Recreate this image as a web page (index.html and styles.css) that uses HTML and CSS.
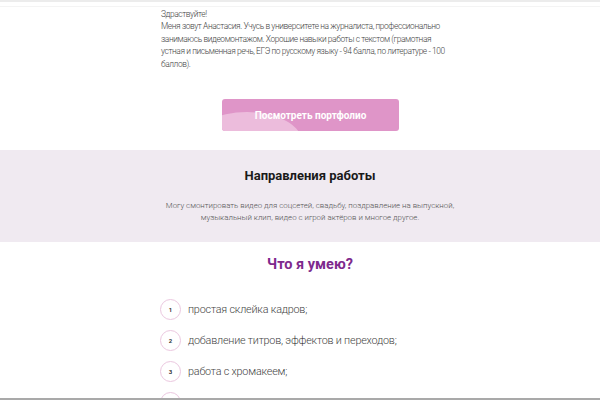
FILE: index.html
```html
<!DOCTYPE html>
<html lang="ru">
<head>
    <meta charset="UTF-8">
    <meta name="viewport" content="width=device-width, initial-scale=1.0">
    <title>Анастасия — видеомонтаж</title>
    <link rel="stylesheet" href="styles.css">
</head>
<body>
    <div class="topbar"></div>

    <section class="about">
        <p>
            Здраствуйте!<br>
            Меня зовут Анастасия. Учусь в университете на журналиста, профессионально<br>
            занимаюсь видеомонтажом. Хорошие навыки работы с текстом (грамотная<br>
            устная и письменная речь, ЕГЭ по русскому языку - 94 балла, по литературе - 100<br>
            баллов).
        </p>
        <a href="#" class="btn"><span>Посмотреть портфолио</span></a>
    </section>

    <section class="directions">
        <h2>Направления работы</h2>
        <p>Могу смонтировать видео для соцсетей, свадьбу, поздравление на выпускной,<br>
            музыкальный клип, видео с игрой актёров и многое другое.</p>
    </section>

    <section class="skills">
        <h2>Что я умею?</h2>
        <ul>
            <li><span class="num">1</span>простая склейка кадров;</li>
            <li><span class="num">2</span>добавление титров, эффектов и переходов;</li>
            <li><span class="num">3</span>работа с хромакеем;</li>
            <li><span class="num">4</span>цветокоррекция;</li>
        </ul>
    </section>

    <div class="bottombar"></div>
</body>
</html>
```

FILE: styles.css
```css
* {
    margin: 0;
    padding: 0;
    box-sizing: border-box;
    font-family: Roboto, 'Liberation Sans', sans-serif;
}
body {
    background-color: #fff;
    color: #555;
}
.topbar {
    height: 7px;
    border-top: 2px solid #ececec;
    border-bottom: 1px solid #f4f4f4;
}
.about {
    width: 300px;
    margin: 0 0 0 161px;
    padding-top: 1px;
}
.about p {
    white-space: nowrap;
    font-size: 8.4px;
    font-weight: 300;
    line-height: 12.4px;
    letter-spacing: -0.4px;
    color: #444;
}
.btn {
    position: relative;
    overflow: hidden;
    display: flex;
    justify-content: center;
    align-items: center;
    width: 177px;
    height: 32px;
    margin: 29px 0 0 61px;
    border-radius: 3px;
    background-color: #df95c8;
    color: #fff;
    font-size: 10px;
    font-weight: 700;
    text-decoration: none;
}
/* светлая волна в углу кнопки */
.btn::before {
    content: '';
    position: absolute;
    left: -30px;
    top: 13px;
    width: 110px;
    height: 60px;
    border-radius: 50%;
    background-color: #ecbcdc;
}
.btn span {
    position: relative;
}
.directions {
    margin-top: 19px;
    height: 92px;
    background-color: #f0eaf1;
    text-align: center;
    padding: 16px 0 0 20px;
}
.directions h2 {
    font-size: 13px;
    font-weight: 700;
    color: #1a1a1a;
    line-height: 20px;
}
.directions p {
    margin-top: 14px;
    font-size: 7.9px;
    font-weight: 300;
    line-height: 12px;
    color: #555;
}
.skills {
    padding: 13px 0 0 160px;
}
.skills h2 {
    width: 300px;
    text-align: center;
    font-size: 14.5px;
    font-weight: 700;
    color: #7e2a8d;
    line-height: 20px;
}
.skills ul {
    list-style: none;
    margin-top: 24px;
}
.skills li {
    display: flex;
    align-items: center;
    gap: 7px;
    height: 20px;
    margin-bottom: 11px;
    font-size: 10.8px;
    font-weight: 300;
    letter-spacing: -0.2px;
    color: #444;
}
.num {
    display: flex;
    justify-content: center;
    align-items: center;
    width: 21px;
    height: 21px;
    border: 1.5px solid #ebc7df;
    border-radius: 50%;
    font-size: 6px;
    font-weight: 700;
    letter-spacing: 0;
    color: #333;
}
.bottombar {
    position: fixed;
    left: 0;
    right: 0;
    bottom: 0;
    height: 2px;
    background-color: #a9a9a9;
}
```
